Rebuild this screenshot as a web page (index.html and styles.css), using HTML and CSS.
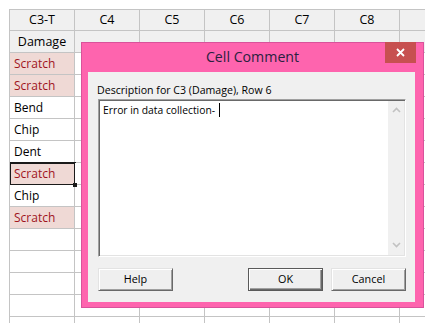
FILE: index.html
```html
<!DOCTYPE html>
<html>
<head>
<meta charset="utf-8">
<link rel="stylesheet" href="styles.css">
</head>
<body>
<div class="sheet">
  <div class="cell hd">C3-T</div><div class="cell hd">C4</div><div class="cell hd">C5</div><div class="cell hd">C6</div><div class="cell hd">C7</div><div class="cell hd">C8</div><div class="cell hd"></div>
  <div class="cell nm">Damage</div><div class="cell nm"></div><div class="cell nm"></div><div class="cell nm"></div><div class="cell nm"></div><div class="cell nm"></div><div class="cell nm"></div>
  <div class="cell bad">Scratch</div><div class="cell"></div><div class="cell"></div><div class="cell"></div><div class="cell"></div><div class="cell"></div><div class="cell"></div>
  <div class="cell bad">Scratch</div><div class="cell"></div><div class="cell"></div><div class="cell"></div><div class="cell"></div><div class="cell"></div><div class="cell"></div>
  <div class="cell txt">Bend</div><div class="cell"></div><div class="cell"></div><div class="cell"></div><div class="cell"></div><div class="cell"></div><div class="cell"></div>
  <div class="cell txt">Chip</div><div class="cell"></div><div class="cell"></div><div class="cell"></div><div class="cell"></div><div class="cell"></div><div class="cell"></div>
  <div class="cell txt">Dent</div><div class="cell"></div><div class="cell"></div><div class="cell"></div><div class="cell"></div><div class="cell"></div><div class="cell"></div>
  <div class="cell bad sel">Scratch</div><div class="cell"></div><div class="cell"></div><div class="cell"></div><div class="cell"></div><div class="cell"></div><div class="cell"></div>
  <div class="cell txt">Chip</div><div class="cell"></div><div class="cell"></div><div class="cell"></div><div class="cell"></div><div class="cell"></div><div class="cell"></div>
  <div class="cell bad">Scratch</div><div class="cell"></div><div class="cell"></div><div class="cell"></div><div class="cell"></div><div class="cell"></div><div class="cell"></div>
  <div class="cell"></div><div class="cell"></div><div class="cell"></div><div class="cell"></div><div class="cell"></div><div class="cell"></div><div class="cell"></div>
  <div class="cell"></div><div class="cell"></div><div class="cell"></div><div class="cell"></div><div class="cell"></div><div class="cell"></div><div class="cell"></div>
  <div class="cell"></div><div class="cell"></div><div class="cell"></div><div class="cell"></div><div class="cell"></div><div class="cell"></div><div class="cell"></div>
  <div class="cell"></div><div class="cell"></div><div class="cell"></div><div class="cell"></div><div class="cell"></div><div class="cell"></div><div class="cell"></div>
  <div class="cell"></div><div class="cell"></div><div class="cell"></div><div class="cell"></div><div class="cell"></div><div class="cell"></div><div class="cell"></div>
</div>

<div class="dialog">
  <div class="titlebar">
    <div class="title">Cell Comment</div>
    <div class="close">
      <svg width="9" height="9" viewBox="0 0 9 9"><path d="M1 1 L8 8 M8 1 L1 8" stroke="#fff" stroke-width="1.8" fill="none"/></svg>
    </div>
  </div>
  <div class="client">
    <div class="label">Description for C3 (Damage), Row 6</div>
    <div class="memo">
      <div class="memo-text">Error in data collection-<span class="caret"></span></div>
      <div class="vscroll">
        <svg width="9" height="6" viewBox="0 0 9 6"><path d="M1 5 L4.5 1.5 L8 5" stroke="#c2c2c2" stroke-width="1.6" fill="none"/></svg>
        <svg width="9" height="6" viewBox="0 0 9 6"><path d="M1 1 L4.5 4.5 L8 1" stroke="#c2c2c2" stroke-width="1.6" fill="none"/></svg>
      </div>
    </div>
    <div class="buttons">
      <div class="btn">Help</div>
      <div class="spacer"></div>
      <div class="btn default">OK</div>
      <div class="btn">Cancel</div>
    </div>
  </div>
</div>
</body>
</html>
```

FILE: styles.css
```css
html, body {
  margin: 0;
  padding: 0;
  background: #ffffff;
  overflow: hidden;
  width: 439px;
  height: 323px;
}

body {
  font-family: "Open Sans", "Noto Sans", sans-serif;
  font-size: 12px;
  color: #000;
}

.sheet {
  margin: 9px 0 0 9px;
  width: 416px;
  height: 314px;
  overflow: hidden;
  display: grid;
  grid-template-columns: repeat(6, 64px) 64px;
  grid-template-rows: 20px;
  grid-auto-rows: 21px;
  gap: 1px;
  background: #c4c4c4;
  border-top: 1px solid #c4c4c4;
  border-left: 1px solid #c4c4c4;
  box-sizing: border-box;
}

.cell {
  background: #ffffff;
  font-size: 12px;
  line-height: 21px;
  padding-left: 4px;
  white-space: nowrap;
  position: relative;
}

.hd {
  background: #f0f0f0;
  text-align: center;
  padding-left: 0;
  line-height: 20px;
  font-size: 12.5px;
}

.nm {
  background: #f0f0f0;
  text-align: center;
  padding-left: 0;
  font-size: 12.5px;
}

.bad {
  background: #efd9d5;
  color: #a0141c;
}

.sel::after {
  content: "";
  position: absolute;
  left: -1px;
  top: -1px;
  right: -2px;
  bottom: -2px;
  border: 2px solid #1a1a1a;
}

.sel::before {
  content: "";
  position: absolute;
  right: -3px;
  bottom: -3px;
  width: 4px;
  height: 4px;
  background: #1a1a1a;
  z-index: 1;
}

.dialog {
  position: absolute;
  left: 81px;
  top: 42px;
  width: 343px;
  height: 266px;
  box-sizing: border-box;
  border: 1px solid #d9529b;
  background: #fe64ae;
  display: flex;
  flex-direction: column;
}

.titlebar {
  height: 29px;
  display: flex;
  justify-content: center;
  position: relative;
}

.title {
  font-size: 14.2px;
  line-height: 28px;
  color: #2a2140;
}

.close {
  position: absolute;
  right: 7px;
  top: -1px;
  width: 31px;
  height: 21px;
  background: #c75050;
  display: flex;
  align-items: center;
  justify-content: center;
}

.client {
  flex: 1;
  margin: 0 8px 5px 6px;
  background: #f0f0f0;
  padding: 11px 9px 0 10px;
  display: flex;
  flex-direction: column;
}

.label {
  font-size: 10.6px;
  line-height: 14px;
  margin-left: -1px;
  color: #000;
}

.memo {
  margin-top: 2px;
  height: 158px;
  box-sizing: border-box;
  background: #fff;
  border-top: 1px solid #a0a0a0;
  border-left: 1px solid #a0a0a0;
  border-right: 1px solid #ffffff;
  border-bottom: 1px solid #ffffff;
  box-shadow: inset 1px 1px 0 #696969, inset -1px -1px 0 #e3e3e3;
  display: flex;
  width: 308px;
}

.memo-text {
  flex: 1;
  padding: 3px 0 0 4px;
  font-size: 10.3px;
  line-height: 14px;
  white-space: nowrap;
}

.caret {
  display: inline-block;
  width: 1px;
  height: 14px;
  background: #000;
  margin-left: 4px;
  vertical-align: top;
}

.vscroll {
  width: 16px;
  margin: 1px 1px 1px 0;
  background: #f0f0f0;
  display: flex;
  flex-direction: column;
  justify-content: space-between;
  align-items: center;
  padding: 6px 0 7px;
}

.buttons {
  margin-top: 11px;
  display: flex;
  gap: 8px;
}

.spacer {
  flex: 1;
}

.btn {
  width: 75px;
  height: 23px;
  box-sizing: border-box;
  background: #efefef;
  border-top: 1px solid #e3e3e3;
  border-left: 1px solid #e3e3e3;
  border-right: 1px solid #696969;
  border-bottom: 1px solid #696969;
  box-shadow: inset 1px 1px 0 #ffffff, inset -1px -1px 0 #a0a0a0;
  text-align: center;
  font-size: 10.8px;
  line-height: 20px;
}

.btn.default {
  border: 1px solid #5a5a5a;
  box-shadow: inset 1px 1px 0 #ffffff, inset -1px -1px 0 #696969, inset -2px -2px 0 #a0a0a0;
}
```
